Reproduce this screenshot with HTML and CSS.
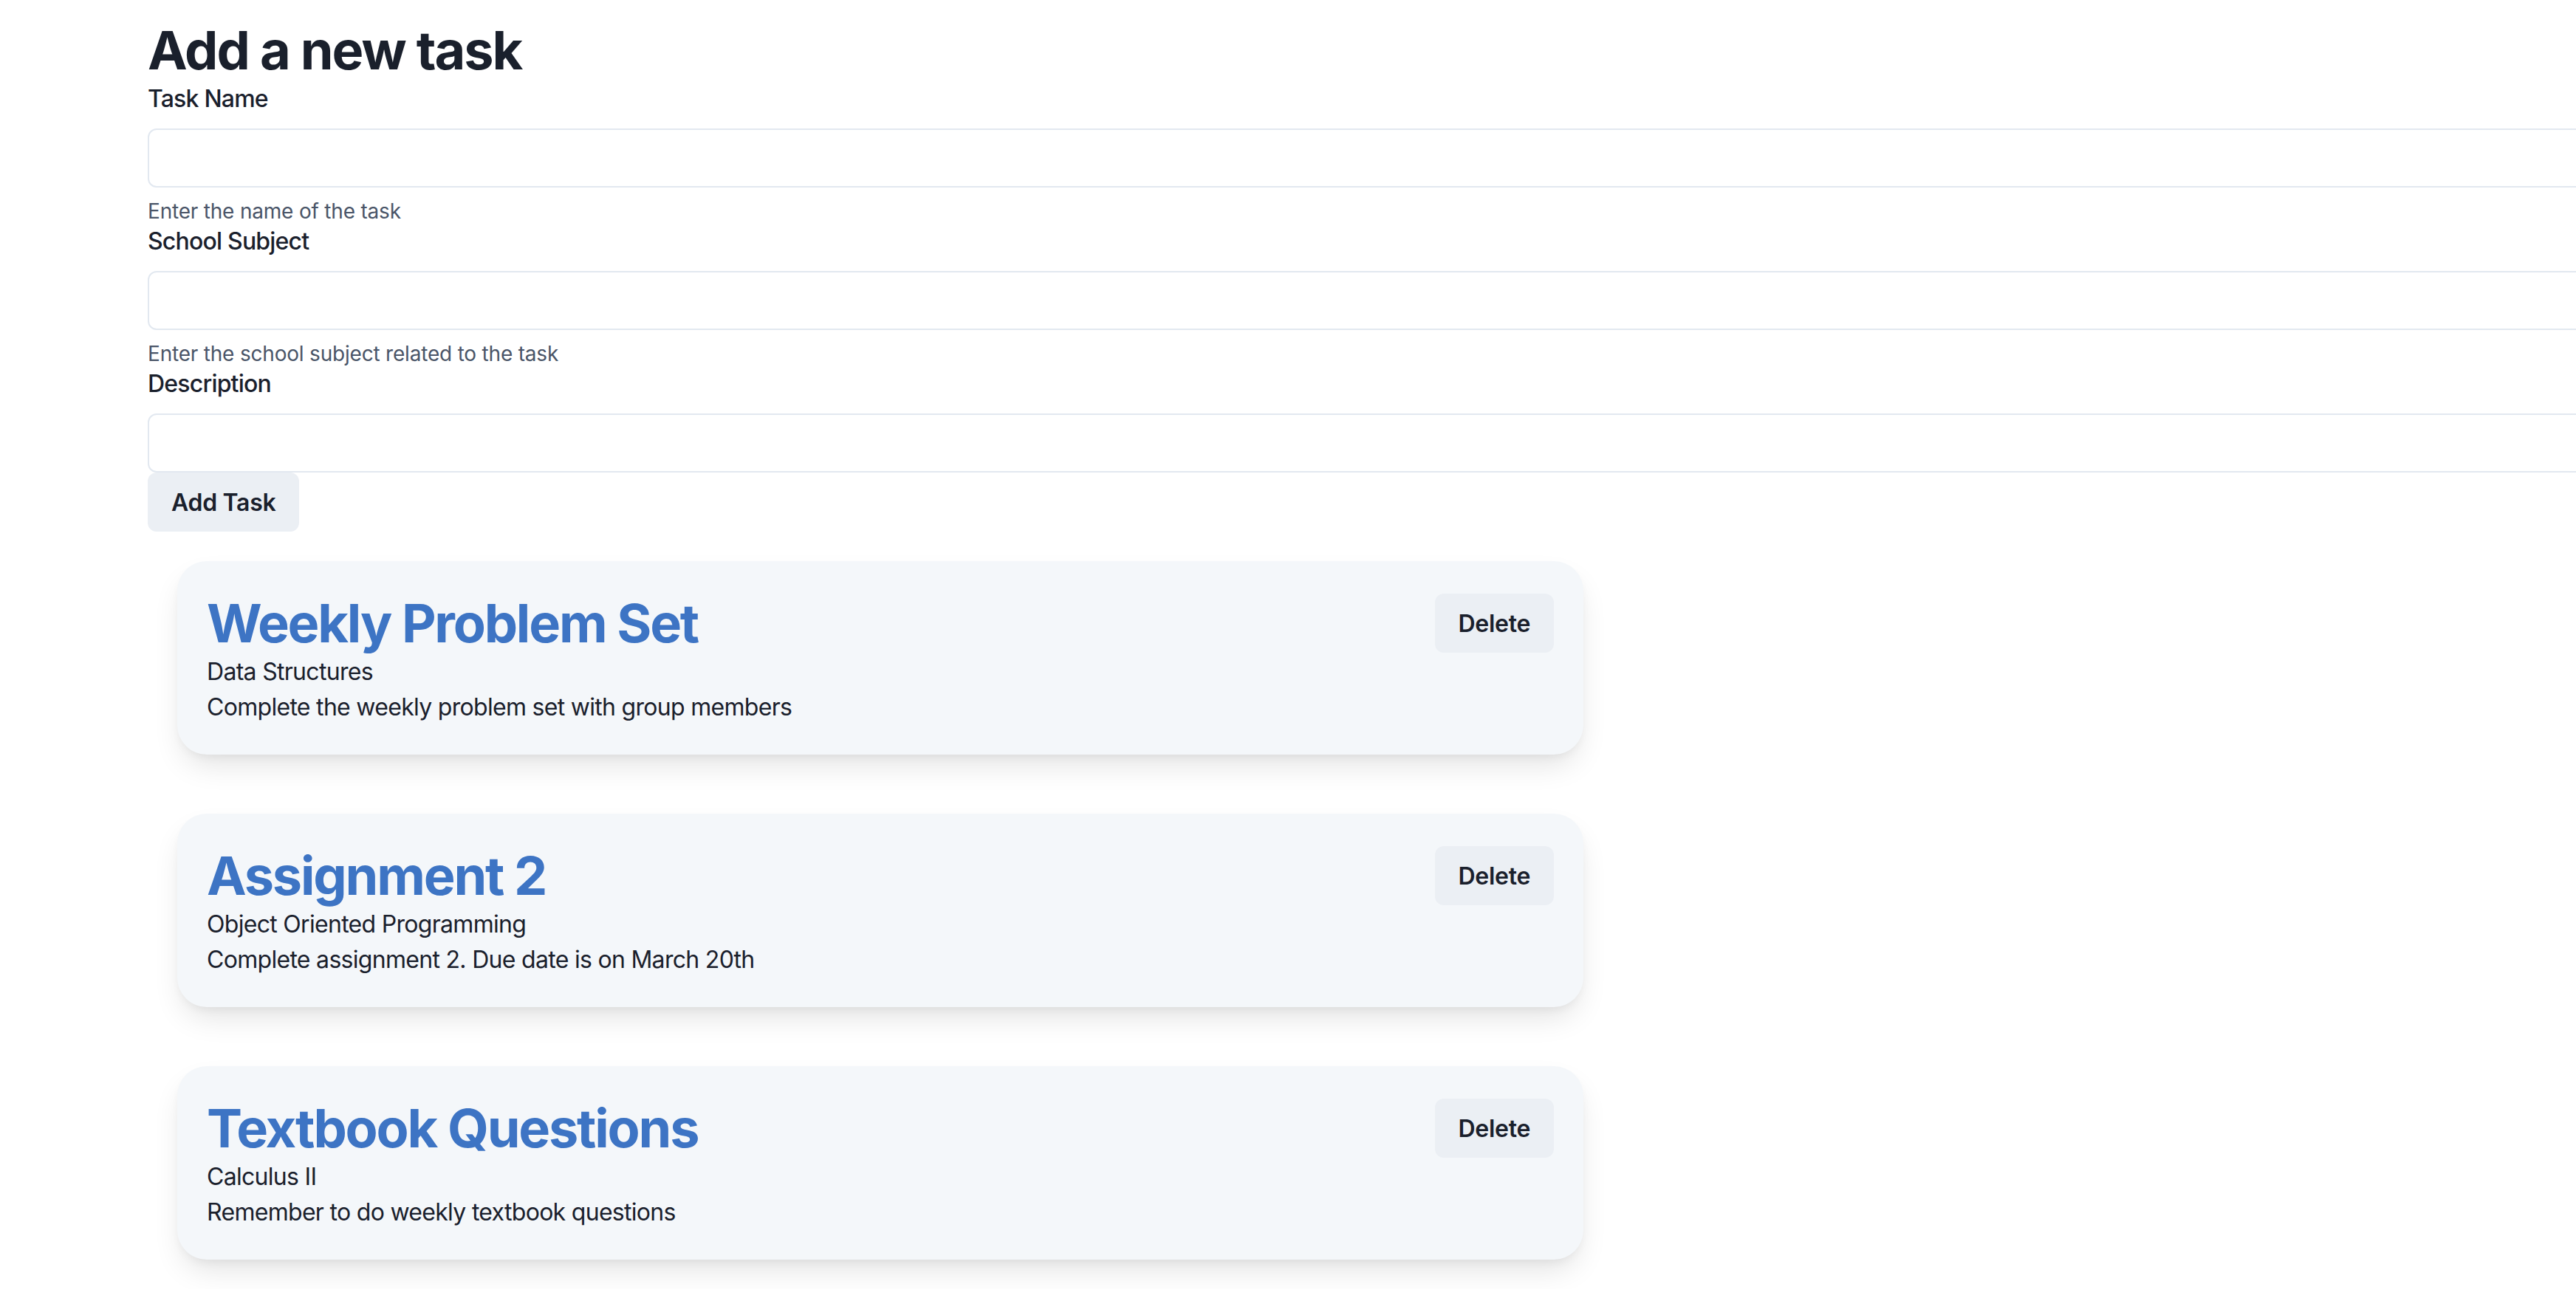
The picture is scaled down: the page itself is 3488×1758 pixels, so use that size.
FILE: index.html
```html
<!DOCTYPE html>
<html lang="en">
<head>
<meta charset="utf-8">
<title>Tasks</title>
<link rel="stylesheet" href="styles.css">
</head>
<body>
<main class="page">
  <h1 class="page-title">Add a new task</h1>
  <form class="task-form">
    <div class="field">
      <label class="field-label" for="name">Task Name</label>
      <input class="field-input" id="name" type="text">
      <p class="field-help">Enter the name of the task</p>
    </div>
    <div class="field">
      <label class="field-label" for="subject">School Subject</label>
      <input class="field-input" id="subject" type="text">
      <p class="field-help">Enter the school subject related to the task</p>
    </div>
    <div class="field">
      <label class="field-label" for="desc">Description</label>
      <input class="field-input" id="desc" type="text">
    </div>
    <button class="btn" type="button">Add Task</button>
  </form>

  <section class="task-list">
    <article class="task-card">
      <div class="task-head">
        <h2 class="task-title">Weekly Problem Set</h2>
        <button class="btn" type="button">Delete</button>
      </div>
      <p class="task-text">Data Structures</p>
      <p class="task-text">Complete the weekly problem set with group members</p>
    </article>
    <article class="task-card">
      <div class="task-head">
        <h2 class="task-title">Assignment 2</h2>
        <button class="btn" type="button">Delete</button>
      </div>
      <p class="task-text">Object Oriented Programming</p>
      <p class="task-text">Complete assignment 2. Due date is on March 20th</p>
    </article>
    <article class="task-card">
      <div class="task-head">
        <h2 class="task-title">Textbook Questions</h2>
        <button class="btn" type="button">Delete</button>
      </div>
      <p class="task-text">Calculus II</p>
      <p class="task-text">Remember to do weekly textbook questions</p>
    </article>
  </section>
</main>
</body>
</html>
```

FILE: styles.css
```css
html, body {
  margin: 0;
  padding: 0;
  overflow: hidden;
  background: #ffffff;
}

body {
  font-family: Inter, "Noto Sans", "Liberation Sans", sans-serif;
  color: #1a202c;
}

.page {
  padding: 26px 0 0 200px;
}

.page-title {
  margin: 0;
  font-size: 72px;
  line-height: 84px;
  font-weight: 700;
  letter-spacing: -2px;
  color: #1a202c;
}

.task-form {
  display: flex;
  flex-direction: column;
  align-items: flex-start;
  width: 3400px;
}

.field {
  display: flex;
  flex-direction: column;
  width: 100%;
}

.field-label {
  font-size: 32px;
  line-height: 48px;
  font-weight: 500;
  letter-spacing: -0.8px;
  margin-bottom: 16px;
  color: #1a202c;
}

.field-input {
  box-sizing: border-box;
  width: 100%;
  height: 80px;
  border: 2px solid #e2e8f0;
  border-radius: 12px;
  background: #ffffff;
  padding: 0 32px;
  font-family: inherit;
  font-size: 32px;
  outline: none;
}

.field-help {
  margin: 16px 0 0;
  font-size: 28px;
  line-height: 33px;
  letter-spacing: -0.2px;
  color: #4a5568;
}

.btn {
  height: 80px;
  padding: 0 32px;
  border: none;
  border-radius: 12px;
  background: #ebeff4;
  font-family: inherit;
  font-size: 32px;
  font-weight: 600;
  letter-spacing: -0.3px;
  color: #1a202c;
  cursor: pointer;
}

.task-list {
  display: flex;
  flex-direction: column;
  gap: 80px;
  padding: 40px;
}

.task-card {
  box-sizing: border-box;
  width: 1904px;
  padding: 42px 40px 40px;
  border-radius: 40px;
  background: #f4f7fa;
  box-shadow: 0 20px 40px -8px rgba(0, 0, 0, 0.12), 0 6px 14px -4px rgba(0, 0, 0, 0.06);
}

.task-head {
  display: flex;
  justify-content: space-between;
  align-items: center;
}

.task-title {
  margin: 0;
  font-size: 72px;
  line-height: 84px;
  font-weight: 700;
  letter-spacing: -2.2px;
  color: #3d74c4;
}

.task-text {
  margin: 0;
  font-size: 32px;
  line-height: 48px;
  letter-spacing: -0.7px;
  color: #1a202c;
}
```
